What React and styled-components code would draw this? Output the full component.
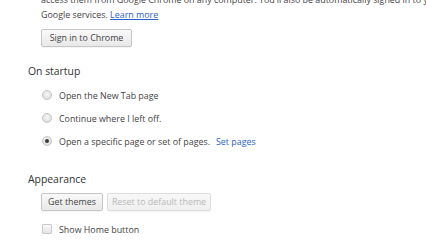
import React from "react";
import styled, { createGlobalStyle } from "styled-components";

const Global = createGlobalStyle`
  html, body { margin: 0; padding: 0; background: #fff; overflow: hidden; }
  body { width: 426px; height: 240px; font-family: "Open Sans", "Noto Sans", sans-serif; color: #333; }
`;

const Page = styled.div`
  margin-top: -8px;
  padding-left: 28px;
  display: flex;
  flex-direction: column;
`;

const Section = styled.section`
  display: flex;
  flex-direction: column;
  margin-top: ${(p) => p.$top || 0}px;
`;

const Heading = styled.h3`
  margin: 0;
  font-weight: normal;
  font-size: 10.4px;
  line-height: 14px;
  height: 14px;
  color: #333;
`;

const Body = styled.div`
  padding-left: 13px;
  display: flex;
  flex-direction: column;
`;

const Para = styled.p`
  margin: 0;
  font-size: 8.9px;
  line-height: 15px;
  white-space: nowrap;
  color: #444;
  overflow: hidden;
  width: 385px;
`;

const Link = styled.a`
  color: #2a62c9;
  text-decoration: ${(p) => (p.$underline ? "underline" : "none")};
  margin-left: ${(p) => p.$gap || 0}px;
  cursor: pointer;
`;

const ButtonRow = styled.div`
  display: flex;
  gap: 4px;
  margin-top: ${(p) => p.$top || 0}px;
`;

const Button = styled.button`
  box-sizing: border-box;
  height: 18px;
  width: ${(p) => p.$w}px;
  padding: 0;
  font-family: inherit;
  font-size: 8.9px;
  line-height: 16px;
  color: ${(p) => (p.disabled ? "#b8b8b8" : "#444")};
  border: 1px solid ${(p) => (p.disabled ? "#dedede" : "#c6c6c6")};
  border-radius: 2px;
  background: ${(p) =>
    p.disabled
      ? "linear-gradient(#f8f8f8, #f0f0f0)"
      : "linear-gradient(#f9f9f9, #e8e8e8)"};
  box-shadow: 0 1px 0 rgba(0,0,0,0.04);
`;

const Options = styled.div`
  display: flex;
  flex-direction: column;
  gap: 9px;
  margin-top: ${(p) => p.$top || 0}px;
`;

const Option = styled.label`
  display: flex;
  align-items: center;
  gap: 7px;
  height: 14px;
  font-size: 8.9px;
  color: #444;
  white-space: nowrap;
`;

const Radio = styled.span`
  box-sizing: border-box;
  width: 10px;
  height: 10px;
  border-radius: 50%;
  border: 1px solid #c4c4c4;
  background: radial-gradient(circle at 50% 40%, #f6f6f6, #d8d8d8);
  display: flex;
  align-items: center;
  justify-content: center;
  margin-left: 1px;
  &::after {
    content: "";
    width: 4px;
    height: 4px;
    border-radius: 50%;
    background: ${(p) => (p.$checked ? "#3a3a3a" : "transparent")};
  }
`;

const Check = styled.span`
  box-sizing: border-box;
  width: 10px;
  height: 10px;
  margin-left: 1px;
  border: 1px solid #c8c8c8;
  border-radius: 1px;
  background: linear-gradient(#fafafa, #e4e4e4);
`;

export default function App() {
  return (
    <>
      <Global />
      <Page>
        <Body>
          <Para>
            access them from Google Chrome on any computer. You'll also be automatically signed in to your
            <br />
            Google services. <Link $underline>Learn more</Link>
          </Para>
          <ButtonRow $top={7}>
            <Button $w={91}>Sign in to Chrome</Button>
          </ButtonRow>
        </Body>

        <Section $top={17}>
          <Heading>On startup</Heading>
          <Body>
            <Options $top={10}>
              <Option>
                <Radio />
                Open the New Tab page
              </Option>
              <Option>
                <Radio />
                Continue where I left off.
              </Option>
              <Option>
                <Radio $checked />
                Open a specific page or set of pages.
                <Link $gap={-1}>Set pages</Link>
              </Option>
            </Options>
          </Body>
        </Section>

        <Section $top={24}>
          <Heading>Appearance</Heading>
          <Body>
            <ButtonRow $top={7}>
              <Button $w={62}>Get themes</Button>
              <Button $w={104} disabled>Reset to default theme</Button>
            </ButtonRow>
            <Options $top={11}>
              <Option>
                <Check />
                Show Home button
              </Option>
            </Options>
          </Body>
        </Section>
      </Page>
    </>
  );
}
